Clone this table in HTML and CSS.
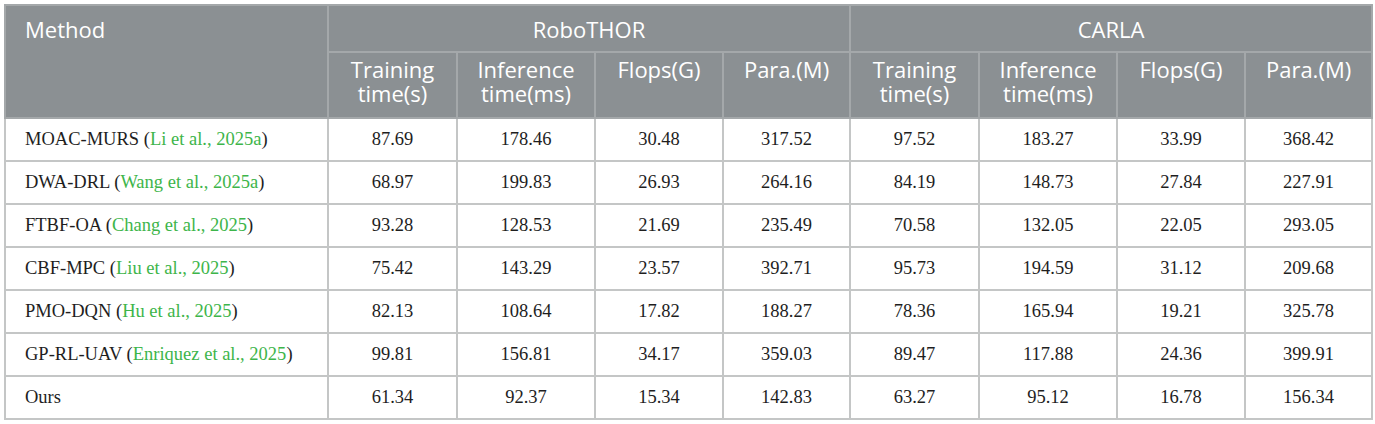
FILE: index.html
```html
<!DOCTYPE html>
<html>
<head>
<meta charset="utf-8">
<link rel="stylesheet" href="styles.css">
</head>
<body>
<table class="tbl">
  <colgroup>
    <col class="c-method">
    <col class="c-train"><col class="c-inf"><col class="c-flops"><col class="c-para">
    <col class="c-train"><col class="c-inf"><col class="c-flops"><col class="c-para">
  </colgroup>
  <thead>
    <tr class="h1">
      <th rowspan="2" class="left">Method</th>
      <th colspan="4">RoboTHOR</th>
      <th colspan="4">CARLA</th>
    </tr>
    <tr class="h2">
      <th>Training<br>time(s)</th>
      <th>Inference<br>time(ms)</th>
      <th>Flops(G)</th>
      <th>Para.(M)</th>
      <th>Training<br>time(s)</th>
      <th>Inference<br>time(ms)</th>
      <th>Flops(G)</th>
      <th>Para.(M)</th>
    </tr>
  </thead>
  <tbody>
    <tr><td class="left">MOAC-MURS (<span class="cite">Li et al., 2025a</span>)</td><td>87.69</td><td>178.46</td><td>30.48</td><td>317.52</td><td>97.52</td><td>183.27</td><td>33.99</td><td>368.42</td></tr>
    <tr><td class="left">DWA-DRL (<span class="cite">Wang et al., 2025a</span>)</td><td>68.97</td><td>199.83</td><td>26.93</td><td>264.16</td><td>84.19</td><td>148.73</td><td>27.84</td><td>227.91</td></tr>
    <tr><td class="left">FTBF-OA (<span class="cite">Chang et al., 2025</span>)</td><td>93.28</td><td>128.53</td><td>21.69</td><td>235.49</td><td>70.58</td><td>132.05</td><td>22.05</td><td>293.05</td></tr>
    <tr><td class="left">CBF-MPC (<span class="cite">Liu et al., 2025</span>)</td><td>75.42</td><td>143.29</td><td>23.57</td><td>392.71</td><td>95.73</td><td>194.59</td><td>31.12</td><td>209.68</td></tr>
    <tr><td class="left">PMO-DQN (<span class="cite">Hu et al., 2025</span>)</td><td>82.13</td><td>108.64</td><td>17.82</td><td>188.27</td><td>78.36</td><td>165.94</td><td>19.21</td><td>325.78</td></tr>
    <tr><td class="left">GP-RL-UAV (<span class="cite">Enriquez et al., 2025</span>)</td><td>99.81</td><td>156.81</td><td>34.17</td><td>359.03</td><td>89.47</td><td>117.88</td><td>24.36</td><td>399.91</td></tr>
    <tr><td class="left">Ours</td><td>61.34</td><td>92.37</td><td>15.34</td><td>142.83</td><td>63.27</td><td>95.12</td><td>16.78</td><td>156.34</td></tr>
  </tbody>
</table>
</body>
</html>
```

FILE: styles.css
```css
html, body {
  margin: 0;
  padding: 0;
  background: #ffffff;
}

body {
  padding: 4px 0 0 4px;
}

.tbl {
  border-collapse: collapse;
  table-layout: fixed;
  width: 1366px;
  border: 2px solid #c4c6c6;
}

.c-method { width: 323px; }
.c-train { width: 129px; }
.c-inf { width: 138px; }
.c-flops { width: 128px; }
.c-para { width: 127px; }

.tbl th {
  background: #8b9093;
  color: #ffffff;
  font-family: "Open Sans", "Lato", sans-serif;
  font-weight: 400;
  font-size: 22px;
  line-height: 24px;
  text-align: center;
  vertical-align: top;
  border: 2px solid #a4a8aa;
  padding: 0 4px;
}

.tbl .h1 th {
  height: 47px;
  padding-top: 11px;
  box-sizing: border-box;
}

.tbl .h2 th {
  height: 66px;
  padding-top: 4px;
  box-sizing: border-box;
}

.tbl th.left {
  text-align: left;
  padding-left: 19px;
}

.tbl td {
  height: 43px;
  box-sizing: border-box;
  border: 2px solid #c4c6c6;
  font-family: "Liberation Serif", "Times New Roman", serif;
  font-size: 18.5px;
  color: #1e1e1e;
  text-align: center;
  vertical-align: middle;
  padding: 0 4px;
}

.tbl td.left {
  text-align: left;
  padding-left: 19px;
}

.cite {
  color: #3db54a;
}
```
